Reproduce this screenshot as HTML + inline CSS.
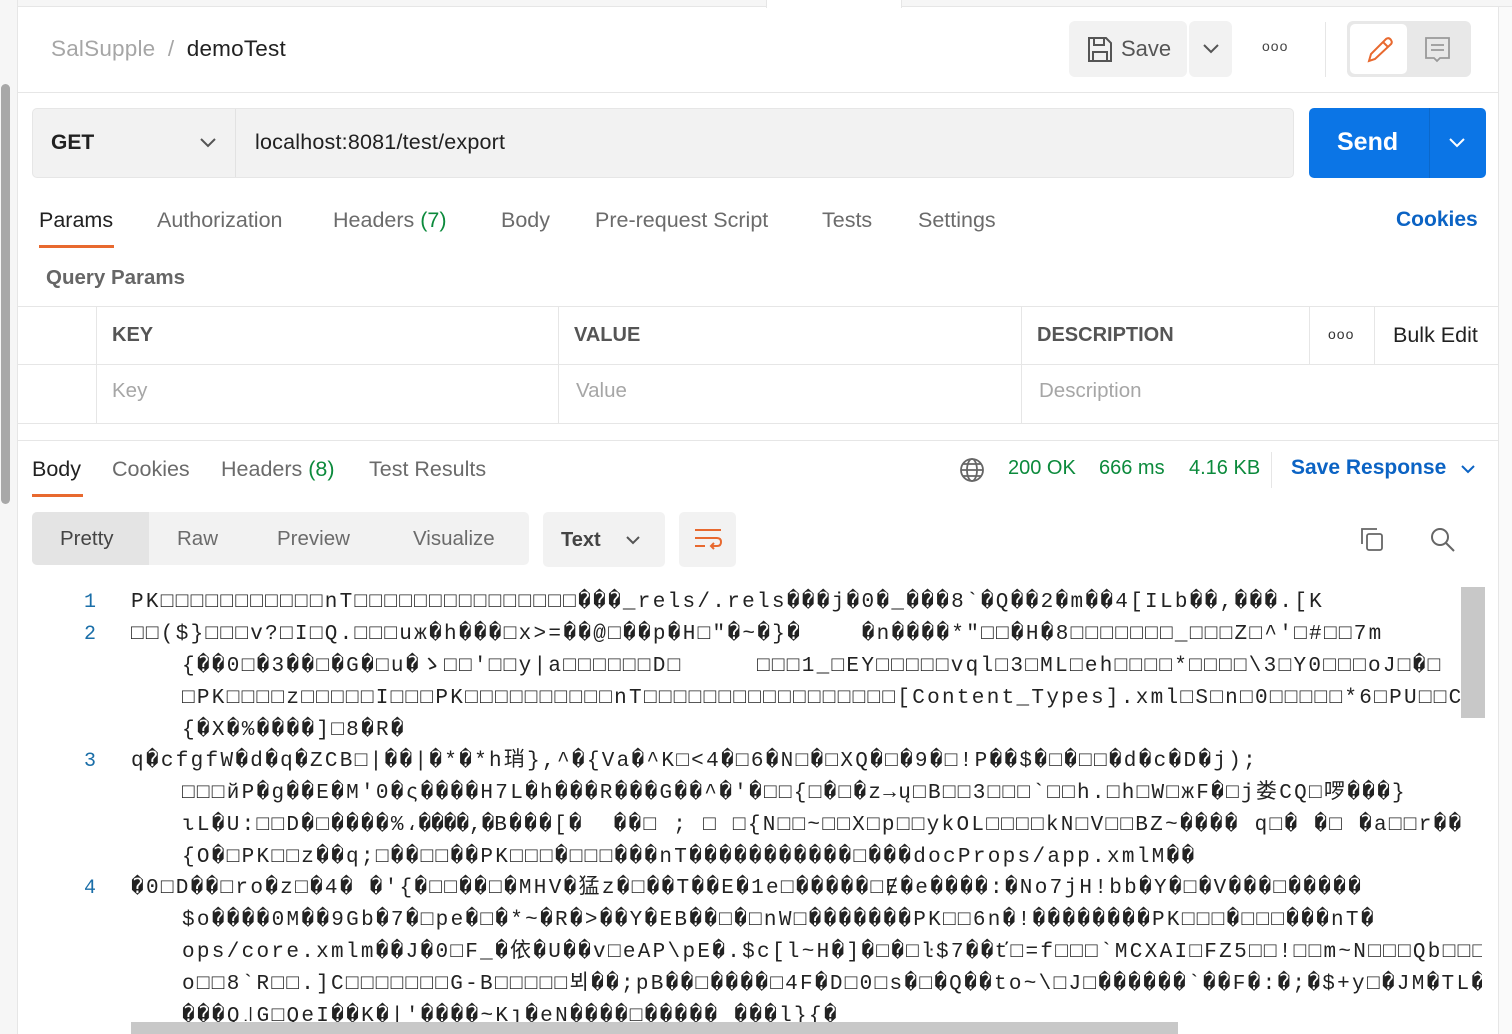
<!DOCTYPE html>
<html><head><meta charset="utf-8"><style>
*{box-sizing:border-box;margin:0;padding:0}
body{width:1512px;height:1034px;overflow:hidden;background:#fff;font-family:"Liberation Sans",Arial,sans-serif;position:relative;color:#212121}
.a{position:absolute}
.t{position:absolute;white-space:nowrap}
.code{position:absolute;left:131px;font-family:"Liberation Mono","DejaVu Sans Mono","Noto Sans CJK SC",monospace;font-size:21px;color:#222;white-space:pre;overflow:hidden;width:1330px;height:32px;line-height:32px;letter-spacing:2.3px}
.ln{position:absolute;left:70px;width:26px;text-align:right;font-family:"Liberation Mono",monospace;font-size:20px;color:#1a6ea8;line-height:32px}
.tab{font-size:21.5px;color:#6b6b6b}
</style></head><body>
<div class="a" style="left:0;top:0;width:18px;height:1034px;background:#f6f6f6;border-right:1px solid #e6e6e6"></div>
<div class="a" style="left:1px;top:84px;width:9px;height:420px;background:#a8a8a8;border-radius:5px"></div>
<div class="a" style="left:18px;top:0;width:1494px;height:7px;background:#f6f6f6;border-bottom:1px solid #e6e6e6"></div>
<div class="a" style="left:766px;top:0;width:136px;height:8px;background:#fff;border-left:1px solid #e6e6e6;border-right:1px solid #e6e6e6"></div>
<div class="a" style="left:1498px;top:7px;width:1px;height:1027px;background:#e6e6e6"></div>
<div class="a" style="left:1499px;top:7px;width:13px;height:1027px;background:#fafafa"></div>

<div class="t" style="left:51px;top:36px;font-size:22.5px;color:#a6a6a6;letter-spacing:0.2px">SalSupple <span style="margin:0 6px">/</span> <span style="color:#212121">demoTest</span></div>
<div class="a" style="left:1069px;top:21px;width:118px;height:56px;background:#f2f2f2;border-radius:6px"></div>
<svg class="a" style="left:1087px;top:36px" width="26" height="27" viewBox="0 0 26 27" fill="none" stroke="#555" stroke-width="2"><path d="M2 2h17l5 5v18H2z"/><path d="M7 2v7h10V2M6 25v-9h14v9"/></svg>
<div class="t" style="left:1121px;top:36px;font-size:22px;color:#555">Save</div>
<div class="a" style="left:1189px;top:21px;width:43px;height:56px;background:#f2f2f2;border-radius:6px"></div>
<svg class="a" style="left:1202px;top:43px" width="18" height="12" viewBox="0 0 18 12" fill="none" stroke="#555" stroke-width="2"><path d="M2 2l7 7 7-7"/></svg>
<div class="t" style="left:1262px;top:38px;font-size:14px;color:#444;letter-spacing:1px">ooo</div>
<div class="a" style="left:1325px;top:22px;width:1px;height:55px;background:#e6e6e6"></div>
<div class="a" style="left:1347px;top:21px;width:124px;height:56px;background:#e8e8e8;border-radius:6px"></div>
<div class="a" style="left:1350px;top:24px;width:57px;height:50px;background:#fff;border-radius:5px"></div>
<svg class="a" style="left:1365px;top:34px" width="30" height="30" viewBox="0 0 30 30" fill="none" stroke="#e8692f" stroke-width="2"><path d="M4 27l2-7L21 5q3-2 5 1t-1 5L10 25z M18 8l5 5"/></svg>
<svg class="a" style="left:1424px;top:36px" width="28" height="28" viewBox="0 0 28 28" fill="none" stroke="#999" stroke-width="1.8"><path d="M2 2h23v20H16l-3 3-3-3H2z M7 9h13M7 14h13"/></svg>
<div class="a" style="left:18px;top:92px;width:1480px;height:1px;background:#e6e6e6"></div>

<div class="a" style="left:32px;top:108px;width:1262px;height:70px;background:#f2f2f2;border:1px solid #e6e6e6;border-radius:5px"></div>
<div class="a" style="left:235px;top:109px;width:1px;height:68px;background:#e2e2e2"></div>
<div class="t" style="left:51px;top:131px;font-size:21px;font-weight:bold;color:#212121">GET</div>
<svg class="a" style="left:199px;top:137px" width="18" height="12" viewBox="0 0 18 12" fill="none" stroke="#555" stroke-width="2"><path d="M2 2l7 7 7-7"/></svg>
<div class="t" style="left:255px;top:130px;font-size:21.5px;color:#212121;letter-spacing:0.2px">localhost:8081/test/export</div>
<div class="a" style="left:1309px;top:108px;width:177px;height:70px;background:#0b75e6;border-radius:5px"></div>
<div class="a" style="left:1429px;top:108px;width:1px;height:70px;background:#0a68cc"></div>
<div class="t" style="left:1337px;top:128px;font-size:25px;font-weight:bold;color:#fff">Send</div>
<svg class="a" style="left:1448px;top:137px" width="18" height="12" viewBox="0 0 18 12" fill="none" stroke="#fff" stroke-width="2"><path d="M2 2l7 7 7-7"/></svg>

<div class="t tab" style="left:39px;top:208px;color:#212121">Params</div>
<div class="a" style="left:39px;top:245px;width:75px;height:3px;background:#e8692f"></div>
<div class="t tab" style="left:157px;top:208px">Authorization</div>
<div class="t tab" style="left:333px;top:208px">Headers <span style="color:#0c8a3c">(7)</span></div>
<div class="t tab" style="left:501px;top:208px">Body</div>
<div class="t tab" style="left:595px;top:208px">Pre-request Script</div>
<div class="t tab" style="left:822px;top:208px">Tests</div>
<div class="t tab" style="left:918px;top:208px">Settings</div>
<div class="t" style="left:1396px;top:208px;font-size:21px;color:#0b63c4;font-weight:bold">Cookies</div>
<div class="t" style="left:46px;top:266px;font-size:20.5px;color:#666;font-weight:bold">Query Params</div>

<div class="a" style="left:18px;top:306px;width:1480px;height:118px;border-top:1px solid #e6e6e6;border-bottom:1px solid #e6e6e6"></div>
<div class="a" style="left:18px;top:364px;width:1480px;height:1px;background:#e6e6e6"></div>
<div class="a" style="left:96px;top:307px;width:1px;height:116px;background:#e6e6e6"></div>
<div class="a" style="left:558px;top:307px;width:1px;height:116px;background:#e6e6e6"></div>
<div class="a" style="left:1021px;top:307px;width:1px;height:116px;background:#e6e6e6"></div>
<div class="a" style="left:1309px;top:307px;width:1px;height:57px;background:#e6e6e6"></div>
<div class="a" style="left:1374px;top:307px;width:1px;height:57px;background:#e6e6e6"></div>
<div class="t" style="left:112px;top:324px;font-size:20px;font-weight:bold;color:#555">KEY</div>
<div class="t" style="left:574px;top:324px;font-size:20px;font-weight:bold;color:#555">VALUE</div>
<div class="t" style="left:1037px;top:324px;font-size:20px;font-weight:bold;color:#555">DESCRIPTION</div>
<div class="t" style="left:1328px;top:326px;font-size:14px;color:#333;letter-spacing:1px">ooo</div>
<div class="t" style="left:1393px;top:323px;font-size:21.5px;color:#212121">Bulk Edit</div>
<div class="t" style="left:112px;top:379px;font-size:20.5px;color:#a6a6a6">Key</div>
<div class="t" style="left:576px;top:379px;font-size:20.5px;color:#a6a6a6">Value</div>
<div class="t" style="left:1039px;top:379px;font-size:20.5px;color:#a6a6a6">Description</div>
<div class="a" style="left:18px;top:440px;width:1480px;height:1px;background:#e6e6e6"></div>

<div class="t tab" style="left:32px;top:457px;color:#212121">Body</div>
<div class="a" style="left:32px;top:494px;width:51px;height:3px;background:#e8692f"></div>
<div class="t tab" style="left:112px;top:457px">Cookies</div>
<div class="t tab" style="left:221px;top:457px">Headers <span style="color:#0c8a3c">(8)</span></div>
<div class="t tab" style="left:369px;top:457px">Test Results</div>
<svg class="a" style="left:959px;top:457px" width="26" height="26" viewBox="0 0 26 26" fill="none" stroke="#666" stroke-width="1.8"><circle cx="13" cy="13" r="11"/><ellipse cx="13" cy="13" rx="5" ry="11"/><path d="M2 13h22M4 7h18M4 19h18"/></svg>
<div class="t" style="left:1008px;top:457px;font-size:20px;color:#0c8a3c">200 OK</div>
<div class="t" style="left:1099px;top:457px;font-size:20px;color:#0c8a3c">666 ms</div>
<div class="t" style="left:1189px;top:457px;font-size:20px;color:#0c8a3c">4.16 KB</div>
<div class="a" style="left:1271px;top:452px;width:1px;height:36px;background:#e6e6e6"></div>
<div class="t" style="left:1291px;top:456px;font-size:21px;color:#0b63c4;font-weight:bold">Save Response</div>
<svg class="a" style="left:1460px;top:464px" width="16" height="11" viewBox="0 0 16 11" fill="none" stroke="#0b63c4" stroke-width="2"><path d="M2 2l6 6 6-6"/></svg>

<div class="a" style="left:32px;top:512px;width:497px;height:53px;background:#f2f2f2;border-radius:5px"></div>
<div class="a" style="left:32px;top:512px;width:117px;height:53px;background:#e4e4e4;border-radius:5px 0 0 5px"></div>
<div class="t" style="left:60px;top:527px;font-size:20.5px;color:#444">Pretty</div>
<div class="t" style="left:177px;top:527px;font-size:20.5px;color:#6b6b6b">Raw</div>
<div class="t" style="left:277px;top:527px;font-size:20.5px;color:#6b6b6b">Preview</div>
<div class="t" style="left:413px;top:527px;font-size:20.5px;color:#6b6b6b">Visualize</div>
<div class="a" style="left:543px;top:512px;width:122px;height:55px;background:#f2f2f2;border-radius:5px"></div>
<div class="t" style="left:561px;top:529px;font-size:20px;color:#444;font-weight:bold">Text</div>
<svg class="a" style="left:625px;top:535px" width="16" height="11" viewBox="0 0 16 11" fill="none" stroke="#555" stroke-width="2"><path d="M2 2l6 6 6-6"/></svg>
<div class="a" style="left:679px;top:512px;width:57px;height:55px;background:#f2f2f2;border-radius:5px"></div>
<svg class="a" style="left:693px;top:527px" width="30" height="26" viewBox="0 0 30 26" fill="none" stroke="#e8692f" stroke-width="2"><path d="M2 3h26M2 11h22q4 0 4 4t-4 4h-6M21 16l-3 3 3 3M2 19h10"/></svg>
<svg class="a" style="left:1359px;top:526px" width="28" height="28" viewBox="0 0 28 28" fill="none" stroke="#666" stroke-width="1.8"><path d="M3 18V3h15"/><rect x="8" y="8" width="15" height="16" rx="2"/></svg>
<svg class="a" style="left:1429px;top:526px" width="28" height="28" viewBox="0 0 28 28" fill="none" stroke="#666" stroke-width="2"><circle cx="11" cy="11" r="8"/><path d="M17 17l8 8"/></svg>

<div class="ln" style="top:587px">1</div>
<div class="ln" style="top:619px">2</div>
<div class="ln" style="top:746px">3</div>
<div class="ln" style="top:873px">4</div>
<div class="code" style="top:587px">PK□□□□□□□□□□□nT□□□□□□□□□□□□□□□���_rels/.rels���j�0�_���8`�Q��2�m��4[ILb��,���.[K</div>
<div class="code" style="top:619px">□□($}□□□v?□I□Q.□□□uж�h���□x>=��@□��p�H□"�~�}�    �n����*"□□�H�8□□□□□□□_□□□Z□^'□#□□7m</div>
<div class="code" style="top:651px;left:182px;width:1300px">{��0□�3��□�G�□u�ゝ□□'□□y|a□□□□□□D□     □□□1_□EY□□□□□vql□3□ML□eh□□□□*□□□□\3□Y0□□□oJ□�□ :□��^□□�</div>
<div class="code" style="top:683px;left:182px;width:1300px">□PK□□□□z□□□□□I□□□PK□□□□□□□□□□nT□□□□□□□□□□□□□□□□□[Content_Types].xml□S□n□0□□□□□*6□PU□□C□□□□□□\</div>
<div class="code" style="top:715px;left:182px;width:1300px">{�X�%����]□8�R�</div>
<div class="code" style="top:746px">q�cfgfW�d�q�ZCB□|��|�*�*h琑},^�{Va�^K□<4�□6�N□�□XQ�□�9�□!P��$�□�□□�d�c�D�j);</div>
<div class="code" style="top:778px;left:182px;width:1300px">□□□йP�g��E�M'0�ς����H7L�h���R���G��^�'�□□{□�□�z→ų□B□□3□□□`□□h.□h□W□жF�□j娄CQ□啰���}</div>
<div class="code" style="top:810px;left:182px;width:1300px">ιL�U:□□D�□����%،����,�B���[�  ��□ ; □ □{N□□~□□X□p□□ykOL□□□□kN□V□□BZ~���� q□� �□ �a□□r��</div>
<div class="code" style="top:842px;left:182px;width:1300px">{O�□PK□□z��q;□��□□��PK□□□�□□□���nT�����������□���docProps/app.xmlM��</div>
<div class="code" style="top:873px">�0□D��□ro�z□�4� �'{�□□��□�MHV�猛z�□��T��E�1e□�����□Ɇ�e����:�No7jH!bb�Y�□�V���□�����</div>
<div class="code" style="top:905px;left:182px;width:1300px">$o����0M��9Gb�7�□pe�□�*~�R�>��Y�EB��□�□nW□�������PK□□6n�!��������PK□□□�□□□���nT�</div>
<div class="code" style="top:937px;left:182px;width:1300px">ops/core.xmlm��J�0□F_�依�U��v□eAP\pE�.$c[l~H�]�□�□ŀ$7��ť□=f□□□`MCXAI□FZ5□□!□□m~N□□□Qb□□□b,�t\Z�</div>
<div class="code" style="top:969px;left:182px;width:1300px">o□□8`R□□.]C□□□□□□□G-B□□□□□뵈��;pB��□����□4F�D□0□s�□�Q��to~\□J□������`��F�:�;�$+y□�JM�TL�</div>
<div class="code" style="top:1001px;left:182px;width:1300px">���Q꜌G□QeI��K�|'����~Kȷ�eN����□�����_���l}{�</div>
<div class="a" style="left:1461px;top:587px;width:24px;height:131px;background:#c8c8c8"></div>
<div class="a" style="left:131px;top:1022px;width:1047px;height:12px;background:#c8c8c8"></div>
</body></html>
